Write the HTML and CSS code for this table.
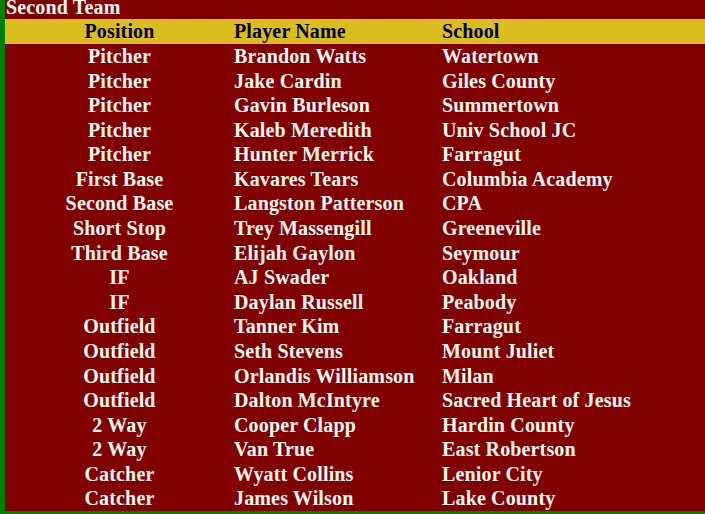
FILE: index.html
```html
<!DOCTYPE html>
<html>
<head>
<meta charset="utf-8">
<link rel="stylesheet" href="styles.css">
</head>
<body>
<div class="team">
  <div class="title">Second Team</div>
  <div class="roster">
    <div class="cell head pos">Position</div><div class="cell head">Player Name</div><div class="cell head">School</div>
    <div class="cell pos">Pitcher</div><div class="cell">Brandon Watts</div><div class="cell">Watertown</div>
    <div class="cell pos">Pitcher</div><div class="cell">Jake Cardin</div><div class="cell">Giles County</div>
    <div class="cell pos">Pitcher</div><div class="cell">Gavin Burleson</div><div class="cell">Summertown</div>
    <div class="cell pos">Pitcher</div><div class="cell">Kaleb Meredith</div><div class="cell">Univ School JC</div>
    <div class="cell pos">Pitcher</div><div class="cell">Hunter Merrick</div><div class="cell">Farragut</div>
    <div class="cell pos">First Base</div><div class="cell">Kavares Tears</div><div class="cell">Columbia Academy</div>
    <div class="cell pos">Second Base</div><div class="cell">Langston Patterson</div><div class="cell">CPA</div>
    <div class="cell pos">Short Stop</div><div class="cell">Trey Massengill</div><div class="cell">Greeneville</div>
    <div class="cell pos">Third Base</div><div class="cell">Elijah Gaylon</div><div class="cell">Seymour</div>
    <div class="cell pos">IF</div><div class="cell">AJ Swader</div><div class="cell">Oakland</div>
    <div class="cell pos">IF</div><div class="cell">Daylan Russell</div><div class="cell">Peabody</div>
    <div class="cell pos">Outfield</div><div class="cell">Tanner Kim</div><div class="cell">Farragut</div>
    <div class="cell pos">Outfield</div><div class="cell">Seth Stevens</div><div class="cell">Mount Juliet</div>
    <div class="cell pos">Outfield</div><div class="cell">Orlandis Williamson</div><div class="cell">Milan</div>
    <div class="cell pos">Outfield</div><div class="cell">Dalton McIntyre</div><div class="cell">Sacred Heart of Jesus</div>
    <div class="cell pos">2 Way</div><div class="cell">Cooper Clapp</div><div class="cell">Hardin County</div>
    <div class="cell pos">2 Way</div><div class="cell">Van True</div><div class="cell">East Robertson</div>
    <div class="cell pos">Catcher</div><div class="cell">Wyatt Collins</div><div class="cell">Lenior City</div>
    <div class="cell pos">Catcher</div><div class="cell">James Wilson</div><div class="cell">Lake County</div>
  </div>
</div>
</body>
</html>
```
FILE: styles.css
```css
html, body {
  margin: 0;
  padding: 0;
}
body {
  background: #008000;
  padding-left: 5px;
  height: 514px;
  overflow: hidden;
  font-family: "Liberation Serif", "Times New Roman", serif;
  font-weight: bold;
  font-size: 20px;
  letter-spacing: 0.15px;
}
.team {
  background: #800000;
  color: #fff8f0;
  height: 511px;
}
.title {
  height: 19px;
  line-height: 15px;
  padding-left: 1px;
  white-space: nowrap;
}
.roster {
  display: grid;
  grid-template-columns: 228px 208px 1fr;
  grid-template-rows: 25px repeat(19, 24.58px);
}
.cell {
  padding: 1px 0 0 1px;
  line-height: 23px;
  white-space: nowrap;
}
.pos {
  text-align: center;
}
.head {
  background: #dabd1f;
  color: #000;
}
```
